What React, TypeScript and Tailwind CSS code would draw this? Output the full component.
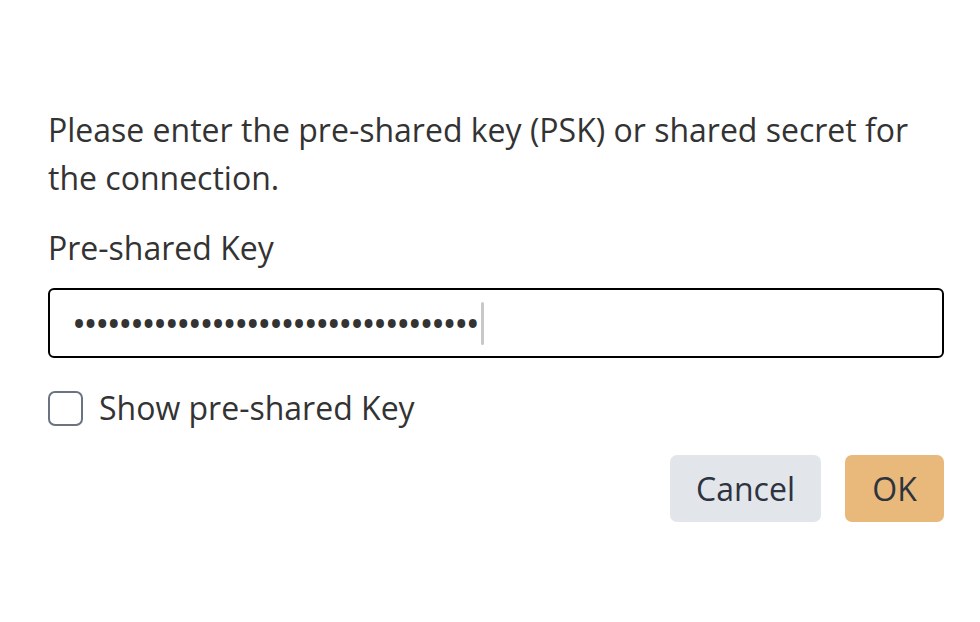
import { useState } from 'react';

const FONT = { fontFamily: '"Open Sans", "Noto Sans", sans-serif' };

export default function App() {
  const [show, setShow] = useState(false);
  const key = 'x'.repeat(35);

  return (
    <div className="w-[980px] h-[622px] bg-white text-[#333333] pl-12 pr-9 pt-[106px]" style={FONT}>
      <p className="text-[32px] leading-[48px]">
        Please enter the pre-shared key (PSK) or shared secret for the connection.
      </p>

      <label className="block mt-[22px] text-[32px] leading-[48px]">Pre-shared Key</label>

      <div className="mt-4 h-[70px] border-2 border-black rounded-[6px] flex items-center pl-[23px]">
        <span className="text-[#333333] text-[32px] font-semibold tracking-[-0.45px] leading-none">
          {show ? key : '•'.repeat(key.length)}
        </span>
        <span className="ml-[3px] w-[3px] h-[43px] bg-[#c8c8c8] rounded-sm" />
      </div>

      <label className="mt-[26px] h-12 flex items-center gap-4 text-[32px] cursor-pointer">
        <span
          onClick={() => setShow(s => !s)}
          className="w-[35px] h-[35px] border-2 border-[#6b7280] rounded-[7px] bg-white"
        />
        <span>Show pre-shared Key</span>
      </label>

      <div className="mt-[23px] flex justify-end gap-6">
        <button className="w-[151px] h-[67px] rounded-[7px] bg-[#e2e5ea] text-[#2d3340] text-[32px]">Cancel</button>
        <button className="w-[99px] h-[67px] rounded-[7px] bg-[#e8b97a] text-[#2d3340] text-[32px]">OK</button>
      </div>
    </div>
  );
}
